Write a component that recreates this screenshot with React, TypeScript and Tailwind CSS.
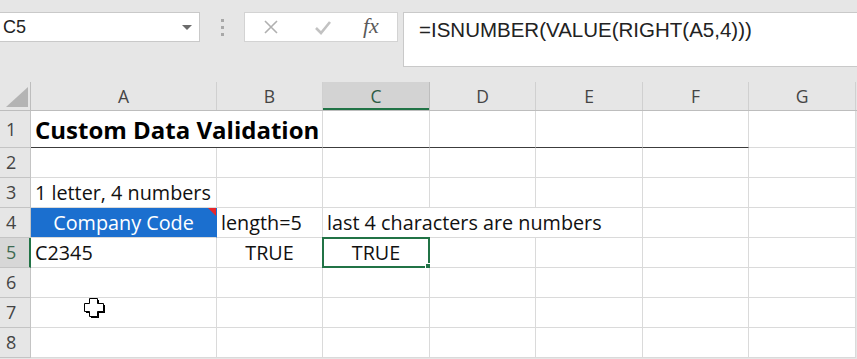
import React from 'react';

const CELL_FONT = { fontFamily: '"Open Sans", Lato, sans-serif' };
const UI_FONT = { fontFamily: 'Arial, "Liberation Sans", sans-serif' };

// column widths: row header, A..G
const COLS = [31, 186, 106, 107, 106, 107, 106, 107];
const HEADERS = ['A', 'B', 'C', 'D', 'E', 'F', 'G'];

const FormulaBar = () => (
  <div className="flex items-start h-[82px] pt-[12px] bg-[#e6e6e6]" style={UI_FONT}>
    {/* name box */}
    <div className="relative w-[200px] h-[30px] bg-white border border-l-0 border-[#c9c9c9] flex items-center pl-[3px]">
      <span className="text-[18px] text-[#222] leading-none">C5</span>
      <div className="absolute right-[7px] top-[12px] w-0 h-0 border-l-[5px] border-r-[5px] border-t-[5px] border-l-transparent border-r-transparent border-t-[#6b6b6b]" />
    </div>
    <div className="w-[44px] h-[30px] flex flex-col items-center justify-center gap-[4px]">
      <div className="w-[3px] h-[3px] bg-[#a8a8a8]" />
      <div className="w-[3px] h-[3px] bg-[#a8a8a8]" />
      <div className="w-[3px] h-[3px] bg-[#a8a8a8]" />
    </div>
    {/* cancel / enter / fx */}
    <div className="w-[154px] h-[30px] bg-white border border-[#d3d3d3] flex items-center">
      <svg width="16" height="16" viewBox="0 0 16 16" className="ml-[18px]">
        <path d="M2 2 L14 14 M14 2 L2 14" stroke="#b0b0b0" strokeWidth="1.6" fill="none" />
      </svg>
      <svg width="18" height="16" viewBox="0 0 18 16" className="ml-[35px]">
        <path d="M2 9 L7 14 L16 3" stroke="#c2c2c2" strokeWidth="2.6" fill="none" />
      </svg>
      <span
        className="ml-[31px] text-[22px] italic text-[#5a5a5a] leading-none -mt-[3px]"
        style={{ fontFamily: '"Liberation Serif", "DejaVu Serif", serif' }}
      >
        fx
      </span>
    </div>
    <div className="ml-[5px] flex-1 h-[55px] bg-white border border-r-0 border-[#c9c9c9] pl-[15px] pt-[7px]">
      <span className="text-[20.5px] text-[#222] leading-none">=ISNUMBER(VALUE(RIGHT(A5,4)))</span>
    </div>
  </div>
);

const ColumnHeaders = () => (
  <div className="flex h-[29px] bg-[#e6e6e6] border-b border-[#bdbdbd]" style={CELL_FONT}>
    <div className="relative h-full border-r border-[#bdbdbd]" style={{ width: COLS[0] }}>
      <svg width="24" height="22" viewBox="0 0 24 22" className="absolute left-[6px] top-[5px]">
        <polygon points="22,0 22,20 0,20" fill="#b4b4b4" />
      </svg>
    </div>
    {HEADERS.map((h, i) => {
      const selected = h === 'C';
      return (
        <div
          key={h}
          className={`h-full flex items-center justify-center border-r text-[17.5px] ${
            selected
              ? 'bg-[#d3d3d3] border-[#bdbdbd] text-[#2f5b45] shadow-[inset_0_-2px_0_#217346]'
              : 'border-[#d0d0d0] text-[#444]'
          }`}
          style={{ width: COLS[i + 1] }}
        >
          {h}
        </div>
      );
    })}
  </div>
);

type CellProps = {
  w: number;
  fill?: string;
  border?: string;
  className?: string;
  children?: React.ReactNode;
};

const Cell = ({
  w,
  fill = 'bg-white text-[#111]',
  border = 'border-[#dadada]',
  className = '',
  children,
}: CellProps) => (
  <div
    className={`relative h-full shrink-0 flex items-center border-r border-b whitespace-nowrap ${fill} ${border} ${className}`}
    style={{ width: w }}
  >
    {children}
  </div>
);

const RowHeader = ({ n, selected = false }: { n: number; selected?: boolean }) => (
  <div
    className={`h-full shrink-0 flex items-center pl-[6px] border-r border-b text-[18px] ${
      selected
        ? 'bg-[#d7d7d7] text-[#3d6a52] border-b-[#c4c4c4] border-r-[#217346] border-r-2'
        : 'bg-[#e6e6e6] text-[#444] border-[#c4c4c4]'
    }`}
    style={{ width: COLS[0] }}
  >
    {n}
  </div>
);

const EmptyRow = ({ n }: { n: number }) => (
  <div className="flex h-[30px]">
    <RowHeader n={n} />
    {COLS.slice(1).map((w, i) => (
      <Cell key={i} w={w} />
    ))}
  </div>
);

const TITLE_BORDER = 'border-r-[#dadada] border-b-[#3c3c3c]';

const Sheet = () => (
  <div className="relative text-[19.8px]" style={CELL_FONT}>
    <ColumnHeaders />
    {/* row 1 */}
    <div className="flex h-[37px]">
      <RowHeader n={1} />
      <Cell
        w={COLS[1] + COLS[2]}
        border={TITLE_BORDER}
        fill="bg-white text-black"
        className="pl-[4px] pt-[2px] font-bold text-[24px]"
      >
        Custom Data Validation
      </Cell>
      <Cell w={COLS[3]} border={TITLE_BORDER} />
      <Cell w={COLS[4]} border={TITLE_BORDER} />
      <Cell w={COLS[5]} border={TITLE_BORDER} />
      <Cell w={COLS[6]} border={TITLE_BORDER} />
      <Cell w={COLS[7]} />
    </div>
    <EmptyRow n={2} />
    {/* row 3 */}
    <div className="flex h-[30px]">
      <RowHeader n={3} />
      <Cell w={COLS[1]} className="pl-[4px]">1 letter, 4 numbers</Cell>
      {COLS.slice(2).map((w, i) => (
        <Cell key={i} w={w} />
      ))}
    </div>
    {/* row 4 */}
    <div className="flex h-[30px]">
      <RowHeader n={4} />
      <Cell
        w={COLS[1]}
        fill="bg-[#1b6fcf] text-white"
        border="border-r-[#1b6fcf] border-b-[#dadada]"
        className="justify-center"
      >
        Company Code
        <div className="absolute right-0 top-0 w-0 h-0 border-t-[8px] border-l-[8px] border-t-[#e8262a] border-l-transparent" />
      </Cell>
      <Cell w={COLS[2]} className="pl-[4px]">length=5</Cell>
      <Cell w={COLS[3] + COLS[4] + COLS[5]} className="pl-[4px]">last 4 characters are numbers</Cell>
      <Cell w={COLS[6]} />
      <Cell w={COLS[7]} />
    </div>
    {/* row 5 */}
    <div className="flex h-[30px]">
      <RowHeader n={5} selected />
      <Cell w={COLS[1]} className="pl-[4px]">C2345</Cell>
      <Cell w={COLS[2]} className="justify-center">TRUE</Cell>
      <Cell w={COLS[3]} className="justify-center">
        TRUE
        <div className="absolute -left-[1px] -top-[1px] -right-[1px] -bottom-[1px] border-2 border-[#217346]" />
        <div className="absolute -right-[4px] -bottom-[4px] w-[6px] h-[6px] bg-[#217346] border border-white box-content" />
      </Cell>
      {COLS.slice(4).map((w, i) => (
        <Cell key={i} w={w} />
      ))}
    </div>
    <EmptyRow n={6} />
    <EmptyRow n={7} />
    <EmptyRow n={8} />

    {/* mouse cursor */}
    <svg width="26" height="24" viewBox="0 0 26 24" className="absolute left-[82px] top-[214px]">
      <path
        d="M7.5 2.5 H15.5 V7.5 H21.5 V15.5 H15.5 V20.5 H7.5 V15.5 H2.5 V7.5 H7.5 Z"
        fill="#000"
        transform="translate(1.5 1.5)"
      />
      <path
        d="M7.5 2.5 H15.5 V7.5 H21.5 V15.5 H15.5 V20.5 H7.5 V15.5 H2.5 V7.5 H7.5 Z"
        fill="#fff"
        stroke="#000"
        strokeWidth="1"
      />
    </svg>
  </div>
);

export default function App() {
  return (
    <div className="w-[857px] h-[359px] overflow-hidden bg-[#e6e6e6]">
      <FormulaBar />
      <Sheet />
    </div>
  );
}
